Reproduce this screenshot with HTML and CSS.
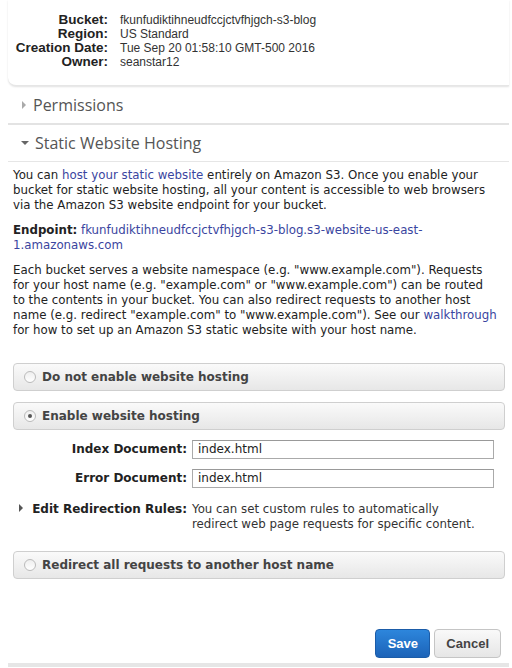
FILE: index.html
```html
<!DOCTYPE html>
<html>
<head>
<meta charset="utf-8">
<link rel="stylesheet" href="styles.css">
</head>
<body>
<div class="page">
  <div class="card">
    <div class="details">
      <div class="dt">Bucket:</div><div class="dd">fkunfudiktihneudfccjctvfhjgch-s3-blog</div>
      <div class="dt">Region:</div><div class="dd">US Standard</div>
      <div class="dt">Creation Date:</div><div class="dd">Tue Sep 20 01:58:10 GMT-500 2016</div>
      <div class="dt">Owner:</div><div class="dd">seanstar12</div>
    </div>
  </div>

  <div class="section section-closed"><span class="tri tri-right"></span>Permissions</div>
  <div class="section section-open"><span class="tri tri-down"></span>Static Website Hosting</div>

  <div class="content">
    <p class="para">You can <a class="link">host your static website</a> entirely on Amazon S3. Once you enable your bucket for static website hosting, all your content is accessible to web browsers via the Amazon S3 website endpoint for your bucket.</p>
    <p class="para"><b>Endpoint:</b> <a class="link">fkunfudiktihneudfccjctvfhjgch-s3-blog.s3-website-us-east-1.amazonaws.com</a></p>
    <p class="para para-nowrap">Each bucket serves a website namespace (e.g. "www.example.com"). Requests<br>for your host name (e.g. "example.com" or "www.example.com") can be routed<br>to the contents in your bucket. You can also redirect requests to another host<br>name (e.g. redirect "example.com" to "www.example.com"). See our <a class="link">walkthrough</a><br>for how to set up an Amazon S3 static website with your host name.</p>

    <div class="option option-first"><span class="radio"></span>Do not enable website hosting</div>
    <div class="option"><span class="radio radio-checked"></span>Enable website hosting</div>

    <div class="fields">
      <div class="flabel">Index Document:</div><div class="finput">index.html</div>
      <div class="flabel">Error Document:</div><div class="finput">index.html</div>
      <div class="flabel flabel-top"><span class="tri tri-right tri-dark"></span>Edit Redirection Rules:</div>
      <div class="ftext">You can set custom rules to automatically<br>redirect web page requests for specific content.</div>
    </div>

    <div class="option option-last"><span class="radio"></span>Redirect all requests to another host name</div>

    <div class="actions">
      <button class="btn btn-primary">Save</button>
      <button class="btn">Cancel</button>
    </div>
  </div>
  <div class="footer-line"></div>
</div>
</body>
</html>
```

FILE: styles.css
```css
html, body {
  margin: 0;
  padding: 0;
  background: #fff;
}
body {
  font-family: "DejaVu Sans", Verdana, sans-serif;
  color: #333;
}
.page {
  width: 501px;
  margin-left: 8px;
}
.card {
  background: #fff;
  border-bottom-left-radius: 8px;
  box-shadow: 0 1px 2px rgba(0,0,0,0.12);
  border-bottom: 1px solid #e6e6e6;
  padding: 13px 0 16px 0;
}
.details {
  display: grid;
  grid-template-columns: 100px 1fr;
  column-gap: 12px;
  font-family: "Liberation Sans", Arial, sans-serif;
  line-height: 14px;
}
.dt {
  text-align: right;
  font-weight: bold;
  font-size: 13.5px;
  color: #222;
  white-space: nowrap;
}
.dd {
  font-size: 12px;
  color: #333;
}
.section {
  display: flex;
  align-items: center;
  font-family: "Open Sans", sans-serif;
  font-size: 16px;
  color: #555;
  padding-left: 13px;
}
.section-closed {
  height: 37px;
  border-bottom: 2px solid #e3e3e3;
}
.section-open {
  height: 36px;
  border-bottom: 1px solid #e6e6e6;
}
.tri {
  display: inline-block;
  width: 0;
  height: 0;
  margin-right: 6px;
}
.tri-right {
  border-top: 4px solid transparent;
  border-bottom: 4px solid transparent;
  border-left: 4px solid #aaa;
  margin-left: 1px;
  margin-right: 7px;
}
.tri-down {
  border-left: 4px solid transparent;
  border-right: 4px solid transparent;
  border-top: 4px solid #666;
  margin-right: 6px;
}
.tri-dark {
  border-left-color: #555;
  margin-right: 9px;
  vertical-align: 1px;
}
.content {
  padding: 6px 4px 0 5px;
  font-size: 11.8px;
  line-height: 15px;
}
.para {
  margin: 0 0 10px 0;
  color: #222;
}
.para-nowrap {
  white-space: nowrap;
}
.para b {
  font-weight: bold;
  color: #222;
}
.link {
  color: #3a45a0;
  text-decoration: none;
}
.option {
  display: flex;
  align-items: center;
  height: 26px;
  border: 1px solid #cfcfcf;
  border-radius: 4px;
  background: linear-gradient(#fafafa, #e7e7e7);
  padding-left: 10px;
  font-weight: bold;
  font-size: 12px;
  color: #444;
  margin-top: 11px;
}
.option-first {
  margin-top: 25px;
}
.option-last {
  margin-top: 19px;
}
.radio {
  width: 10px;
  height: 10px;
  border: 1px solid #bbb;
  border-radius: 50%;
  background: linear-gradient(#eee, #fff);
  margin-right: 6px;
  display: inline-flex;
  align-items: center;
  justify-content: center;
}
.radio-checked::after {
  content: "";
  width: 4px;
  height: 4px;
  border-radius: 50%;
  background: #555;
}
.fields {
  display: grid;
  grid-template-columns: 174px 302px;
  column-gap: 5px;
  row-gap: 10px;
  margin-top: 10px;
  align-items: center;
}
.flabel {
  text-align: right;
  font-weight: bold;
  font-size: 12px;
  color: #222;
  white-space: nowrap;
}
.flabel-top {
  align-self: start;
  margin-top: 4px;
}
.finput {
  height: 17px;
  border: 1px solid #aaa;
  border-top-color: #999;
  padding-left: 5px;
  font-size: 12px;
  line-height: 17px;
  color: #222;
}
.ftext {
  margin-top: 4px;
  color: #333;
  white-space: nowrap;
}
.actions {
  display: flex;
  justify-content: flex-end;
  gap: 4px;
  margin-top: 50px;
  padding-right: 4px;
}
.btn {
  height: 29px;
  border: 1px solid #c5c5c5;
  border-radius: 4px;
  background: linear-gradient(#f9f9f9, #e6e6e6);
  font-family: "Liberation Sans", Arial, sans-serif;
  font-weight: bold;
  font-size: 13px;
  color: #444;
  padding: 0 11px;
}
.btn-primary {
  width: 55px;
  background: linear-gradient(#2d86dc, #1c63b8);
  border-color: #1b5ca8;
  color: #fff;
}
.footer-line {
  height: 4px;
  background: #e6e6e6;
  margin-top: 5px;
}
```
